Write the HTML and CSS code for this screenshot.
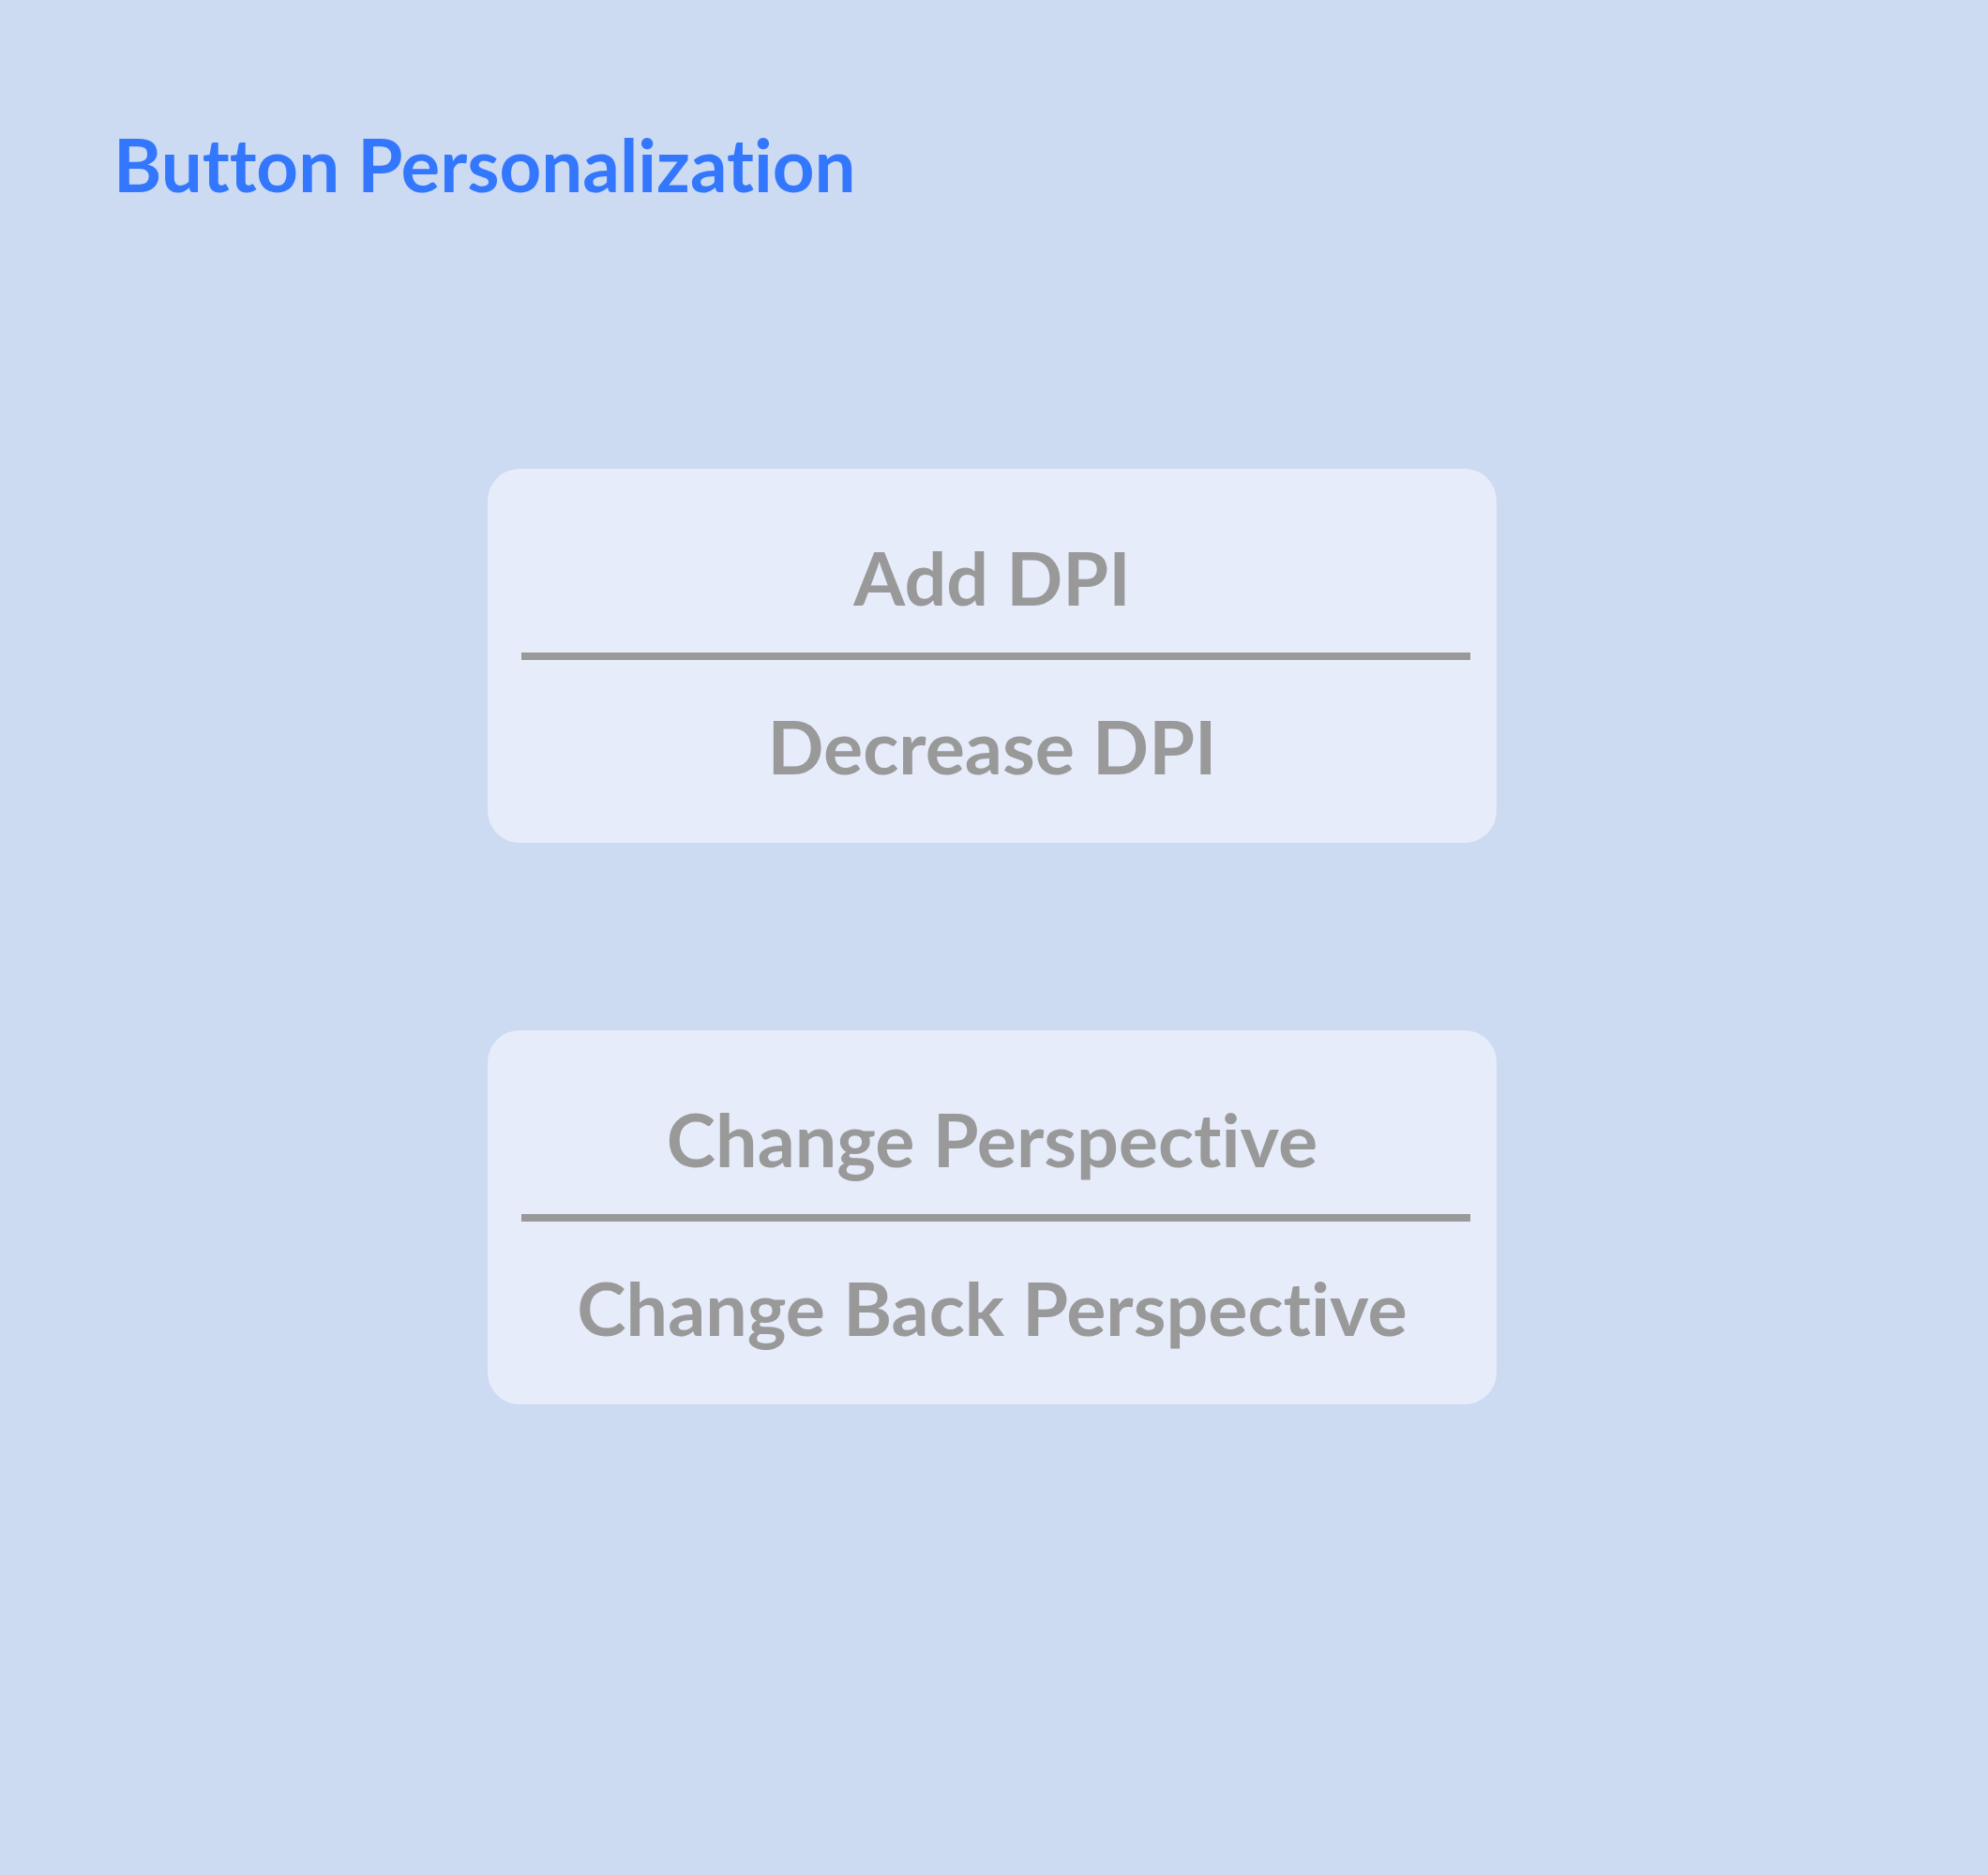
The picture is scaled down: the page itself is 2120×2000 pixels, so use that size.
FILE: index.html
```html
<!DOCTYPE html>
<html lang="en">
<head>
<meta charset="utf-8">
<title>Button Personalization</title>
<link rel="stylesheet" href="styles.css">
</head>
<body>
<main class="page">
  <h1 class="title">Button Personalization</h1>
  <section class="cards">
    <div class="card">
      <div class="row row-top">Add DPI</div>
      <div class="divider"></div>
      <div class="row row-bottom">Decrease DPI</div>
    </div>
    <div class="card">
      <div class="row row-top">Change Perspective</div>
      <div class="divider"></div>
      <div class="row row-bottom">Change Back Perspective</div>
    </div>
  </section>
</main>
</body>
</html>
```
FILE: styles.css
```css
html, body {
  margin: 0;
  padding: 0;
}
body {
  background: #ccdaf2;
  font-family: Lato, "Noto Sans", "Liberation Sans", sans-serif;
  font-variant-ligatures: none;
  width: 2120px;
  min-height: 2000px;
}
.page {
  display: flex;
  flex-direction: column;
}
.title {
  margin: 136px 0 0 0;
  padding-left: 121px;
  font-size: 78px;
  line-height: 78px;
  font-weight: 700;
  color: #3377ff;
}
.cards {
  display: flex;
  flex-direction: column;
  gap: 200px;
  margin-top: 286px;
  padding-left: 520px;
}
.card {
  width: 1076px;
  box-sizing: border-box;
  background: #e6ecfa;
  border-radius: 34px;
  padding: 66px 28px 53px 36px;
  display: flex;
  flex-direction: column;
}
.row {
  height: 100px;
  line-height: 100px;
  font-size: 79px;
  font-weight: 700;
  color: #999999;
  text-align: center;
  margin-left: -36px;
  margin-right: -28px;
  white-space: nowrap;
}
.row-top {
  margin-bottom: 30px;
}
.row-bottom {
  margin-top: 42px;
}
.divider {
  height: 8px;
  background: #999999;
}
```
